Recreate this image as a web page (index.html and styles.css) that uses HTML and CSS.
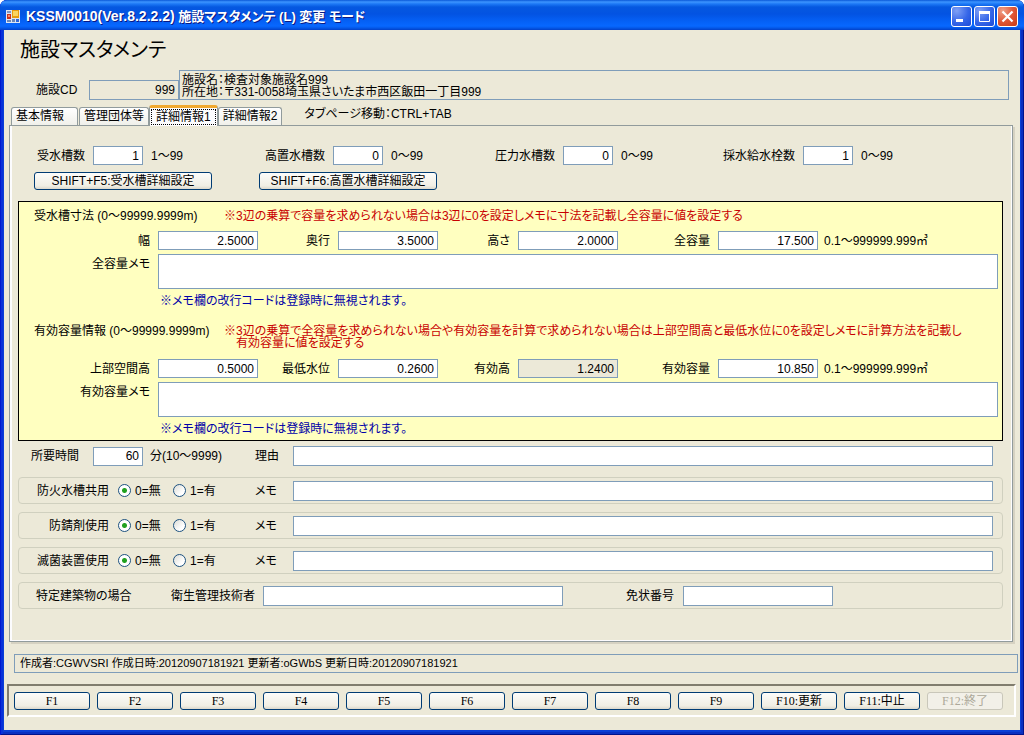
FILE: index.html
```html
<!DOCTYPE html>
<html lang="ja">
<head>
<meta charset="utf-8">
<title>KSSM0010 施設マスタメンテ</title>
<link rel="stylesheet" href="styles.css">
</head>
<body>
<div class="window">
  <header class="titlebar">
    <svg class="app-icon" width="15" height="15" viewBox="0 0 15 15" aria-hidden="true">
      <rect y="1" width="14" height="13" fill="#dfe6f2"/>
      <rect x="1" y="2" width="4" height="2" fill="#7c95c4"/>
      <rect x="1" y="5" width="4" height="5" fill="#c8321e"/>
      <rect x="2" y="6" width="2" height="2" fill="#f08a70"/>
      <rect x="6" y="1" width="7" height="8" fill="#e89c10"/>
      <rect x="7" y="2" width="5" height="5" fill="#fbd560"/>
      <rect x="1" y="11" width="4" height="2" fill="#6d88b8"/>
      <rect x="6" y="10" width="3" height="3" fill="#6d88b8"/>
      <rect x="10" y="10" width="3" height="3" fill="#2f66d8"/>
    </svg>
    <div class="caption"><span class="caption-id">KSSM0010(Ver.8.2.2.2)</span> 施設マスタメンテ (L) 変更 モード</div>
    <div class="controls">
      <button class="control" type="button" aria-label="最小化"><svg width="19" height="19" viewBox="0 0 19 19"><rect x="4" y="12" width="7" height="3" fill="#fff"/></svg></button>
      <button class="control" type="button" aria-label="最大化"><svg width="19" height="19" viewBox="0 0 19 19"><path d="M4.500 4.500h10v10h-10z" fill="none" stroke="#fff"/><path d="M4 4h11v3H4z" fill="#fff"/></svg></button>
      <button class="control control-close" type="button" aria-label="閉じる"><svg width="19" height="19" viewBox="0 0 19 19"><path d="M4.500 4.500l10 10M14.500 4.500l-10 10" stroke="#fff" stroke-width="2.200"/></svg></button>
    </div>
  </header>

  <main class="content">
    <h1 class="heading">施設マスタメンテ</h1>

    <div class="facility">
      <label class="facility-label" for="code">施設CD</label>
      <input class="field number readonly facility-code" id="code" value="999" readonly>
      <div class="facility-info">施設名：検査対象施設名999<br>所在地：〒331-0058埼玉県さいたま市西区飯田一丁目999</div>
    </div>

    <div class="tabs">
      <div class="tablist" role="tablist">
        <button class="tab" type="button" role="tab">基本情報</button>
        <button class="tab" type="button" role="tab">管理団体等</button>
        <button class="tab tab-active" type="button" role="tab" aria-selected="true"><span class="tab-focus">詳細情報1</span></button>
        <button class="tab" type="button" role="tab">詳細情報2</button>
      </div>
      <span class="tab-hint">タブページ移動：CTRL+TAB</span>
    </div>

    <section class="panel" role="tabpanel">
      <div class="counts">
        <label for="c1">受水槽数</label><input class="field number" id="c1" value="1"><span>1～99</span>
        <label for="c2">高置水槽数</label><input class="field number" id="c2" value="0"><span>0～99</span>
        <label for="c3">圧力水槽数</label><input class="field number" id="c3" value="0"><span>0～99</span>
        <label for="c4">採水給水栓数</label><input class="field number" id="c4" value="1"><span>0～99</span>
      </div>
      <div class="details">
        <button class="button" type="button">SHIFT+F5:受水槽詳細設定</button>
        <button class="button" type="button">SHIFT+F6:高置水槽詳細設定</button>
      </div>

      <div class="tank">
        <div class="tank-head">
          <div>受水槽寸法 (0～99999.9999m)</div>
          <div class="warning">※3辺の乗算で容量を求められない場合は3辺に0を設定しメモに寸法を記載し全容量に値を設定する</div>
        </div>
        <div class="measures">
          <label for="m1">幅</label><input class="field number" id="m1" value="2.5000">
          <label for="m2">奥行</label><input class="field number" id="m2" value="3.5000">
          <label for="m3">高さ</label><input class="field number" id="m3" value="2.0000">
          <label for="m4">全容量</label><input class="field number" id="m4" value="17.500">
          <span class="unit">0.1～999999.999㎥</span>
          <label class="memo-label" for="memo1">全容量メモ</label><textarea class="field memo" id="memo1"></textarea>
          <p class="notice">※メモ欄の改行コードは登録時に無視されます。</p>
        </div>

        <div class="tank-head tank-head-second">
          <div>有効容量情報 (0～99999.9999m)</div>
          <div class="warning">※3辺の乗算で全容量を求められない場合や有効容量を計算で求められない場合は上部空間高と最低水位に0を設定しメモに計算方法を記載し<br>有効容量に値を設定する</div>
        </div>
        <div class="measures">
          <label for="n1">上部空間高</label><input class="field number" id="n1" value="0.5000">
          <label for="n2">最低水位</label><input class="field number" id="n2" value="0.2600">
          <label for="n3">有効高</label><input class="field number readonly" id="n3" value="1.2400" readonly>
          <label for="n4">有効容量</label><input class="field number" id="n4" value="10.850">
          <span class="unit">0.1～999999.999㎥</span>
          <label class="memo-label" for="memo2">有効容量メモ</label><textarea class="field memo" id="memo2"></textarea>
          <p class="notice">※メモ欄の改行コードは登録時に無視されます。</p>
        </div>
      </div>

      <div class="time">
        <label for="t1">所要時間</label>
        <input class="field number" id="t1" value="60">
        <span>分(10～9999)</span>
        <label for="t2">理由</label>
        <input class="field" id="t2">
      </div>

      <div class="group" role="radiogroup" aria-label="防火水槽共用">
        <span class="group-label">防火水槽共用</span>
        <label class="choice"><input class="radio" type="radio" name="g1" checked>0=無</label>
        <label class="choice"><input class="radio" type="radio" name="g1">1=有</label>
        <label for="g1m">メモ</label>
        <input class="field" id="g1m">
      </div>
      <div class="group" role="radiogroup" aria-label="防錆剤使用">
        <span class="group-label">防錆剤使用</span>
        <label class="choice"><input class="radio" type="radio" name="g2" checked>0=無</label>
        <label class="choice"><input class="radio" type="radio" name="g2">1=有</label>
        <label for="g2m">メモ</label>
        <input class="field" id="g2m">
      </div>
      <div class="group" role="radiogroup" aria-label="滅菌装置使用">
        <span class="group-label">滅菌装置使用</span>
        <label class="choice"><input class="radio" type="radio" name="g3" checked>0=無</label>
        <label class="choice"><input class="radio" type="radio" name="g3">1=有</label>
        <label for="g3m">メモ</label>
        <input class="field" id="g3m">
      </div>
      <div class="group building">
        <span>特定建築物の場合</span>
        <label for="b1">衛生管理技術者</label>
        <input class="field" id="b1">
        <label for="b2">免状番号</label>
        <input class="field" id="b2">
      </div>
    </section>

    <div class="status">作成者:CGWVSRI 作成日時:20120907181921 更新者:oGWbS 更新日時:20120907181921</div>

    <nav class="keys">
      <button class="button key" type="button">F1</button>
      <button class="button key" type="button">F2</button>
      <button class="button key" type="button">F3</button>
      <button class="button key" type="button">F4</button>
      <button class="button key" type="button">F5</button>
      <button class="button key" type="button">F6</button>
      <button class="button key" type="button">F7</button>
      <button class="button key" type="button">F8</button>
      <button class="button key" type="button">F9</button>
      <button class="button key" type="button">F10:更新</button>
      <button class="button key" type="button">F11:中止</button>
      <button class="button key" type="button" disabled>F12:終了</button>
    </nav>
  </main>
</div>
</body>
</html>
```
FILE: styles.css
```css
* { box-sizing: border-box; }

body {
  margin: 0;
  background: #fff;
  color: #000;
  font: 12px/14px "Liberation Sans", "Noto Sans CJK JP", sans-serif;
  font-feature-settings: "palt";
}

button, input, textarea {
  margin: 0;
  font: inherit;
  font-feature-settings: inherit;
  color: inherit;
}

.window {
  display: flex;
  flex-direction: column;
  min-height: 100vh;
  padding: 0 4px 5px;
  background: #0a3fd6;
  box-shadow: inset 1px 0 #0019cf, inset -1px -1px #00138c, inset 3px 0 #0831d9, inset -3px -3px #0a2fc0;
  border-radius: 7px 7px 0 0;
}

.titlebar {
  display: flex;
  align-items: center;
  height: 30px;
  margin: 0 -4px;
  padding: 2px 6px 0;
  border-radius: 7px 7px 0 0;
  background: linear-gradient(#0a58d8 0, #3d95ff 2px, #1c78f5 4px, #0558e0 7px, #0353e2 14px, #0560f5 21px, #0768ff 26px, #0458e8 28px, #0340c8 30px);
  color: #fff;
}

.app-icon { flex: none; margin-right: 5px; }

.caption {
  flex: 1;
  font-size: 13px;
  font-weight: bold;
  white-space: nowrap;
  text-shadow: 1px 1px #0a1883;
}

.caption-id { font-size: 14px; }

.controls { display: flex; gap: 2px; }

.control {
  width: 21px;
  height: 21px;
  padding: 0;
  border: 1px solid #fff;
  border-radius: 3px;
  background: radial-gradient(circle at 25% 20%, #7fa0f5, #3566e8 55%, #1c4bd8);
}

.control svg { display: block; }

.control-close { background: radial-gradient(circle at 25% 20%, #f0a088, #e05838 50%, #c83a14); }

.content {
  flex: 1;
  display: flex;
  flex-direction: column;
  padding: 6px 6px 13px 5px;
  background: #ece9d8;
}

.heading {
  margin: 0 0 0 11px;
  font-size: 20px;
  line-height: 28px;
  font-weight: normal;
}

.facility {
  display: flex;
  align-items: flex-end;
  margin: 6px 0 0 27px;
}

.facility-label { width: 53px; padding-bottom: 3px; }

.field {
  width: 100%;
  min-width: 0;
  height: 20px;
  padding: 0 3px;
  border: 1px solid #7f9db9;
  border-radius: 0;
  background: #fff;
  outline: none;
  resize: none;
}

.number { height: 19px; text-align: right; }

.readonly { background: #ece9d8; }

.facility-code { flex: none; width: 90px; height: 20px; }

.facility-info {
  flex: 1;
  height: 30px;
  margin-right: 5px;
  padding: 3px 2px;
  border: 1px solid #7f9db9;
  line-height: 12px;
}

.tabs {
  display: flex;
  align-items: flex-end;
  height: 20px;
  margin: 5px 0 0 2px;
}

.tablist { display: flex; align-items: flex-end; }

.tab {
  height: 18px;
  padding: 0 4px;
  border: 1px solid #919b9c;
  border-bottom: 0;
  border-radius: 3px 3px 0 0;
  background: linear-gradient(#fff, #f0f0ea);
  line-height: 17px;
}

.tab:first-child { width: 67px; margin-right: 1px; text-align: left; }

.tab-active {
  position: relative;
  height: 21px;
  margin-bottom: -1px;
  padding: 0 1px;
  border-top: 3px solid #f0a830;
  background: #fcfcfe;
}

.tab-focus {
  display: block;
  height: 16px;
  padding: 0 4px;
  border: 1px dotted #000;
  line-height: 14px;
}

.tab-hint { margin-left: 22px; padding-bottom: 4px; }

.panel {
  display: flex;
  flex: 1;
  flex-direction: column;
  margin-right: 1px;
  padding: 20px 9px 32px 8px;
  border: 1px solid #919b9c;
  box-shadow: inset 2px 0 #fcfcfe, inset -1px -1px #fcfcfe, 2px 2px #d6d2c2;
}

.counts {
  display: grid;
  grid-template-columns: 67px 50px 92px 74px 50px 82px 74px 50px 92px 74px 50px 1fr;
  column-gap: 8px;
  align-items: center;
}

.counts label, .measures label { text-align: right; }

.details { display: flex; gap: 47px; margin: 7px 0 0 16px; }

.button {
  height: 18px;
  padding: 0;
  border: 1px solid #003c74;
  border-radius: 3px;
  background: linear-gradient(#fcfcfa, #f0eee4 80%, #dcd8cc);
  line-height: 16px;
  white-space: nowrap;
}

.details .button { width: 178px; }

.tank {
  margin-top: 11px;
  padding: 7px 4px 4px;
  border: 1px solid #000;
  background: #ffffc0;
}

.tank-head {
  display: grid;
  grid-template-columns: 190px 1fr;
  margin-left: 11px;
  min-height: 22px;
}

.warning {
  padding: 1px 0 0 12px;
  color: #c80000;
  line-height: 12px;
  text-indent: -12px;
}

.measures {
  display: grid;
  grid-template-columns: 127px 100px 64px 100px 64px 100px 84px 100px 1fr;
  column-gap: 8px;
  row-gap: 4px;
  align-items: center;
}

.unit { margin-left: -2px; }

.measures .memo-label { align-self: start; padding-top: 3px; }

.memo { grid-column: 2 / -1; height: 35px; }

.notice {
  grid-column: 2 / -1;
  margin: 1px 0 0 2px;
  color: #0000a8;
}

.tank-head-second { min-height: 35px; margin-top: 16px; }

.time {
  display: grid;
  grid-template-columns: 62px 50px 7px 105px 38px 1fr;
  align-items: center;
  margin: 5px 10px 0 13px;
}

.time span { grid-column: 4; }

.group {
  display: grid;
  grid-template-columns: 99px 55px 82px 38px 1fr;
  align-items: center;
  height: 27px;
  margin-top: 8px;
  padding-right: 9px;
  border: 1px solid #d0d0bf;
  border-radius: 4px;
}

.time + .group { margin-top: 11px; }

.group-label { padding-right: 9px; text-align: right; }

.choice { display: flex; align-items: center; gap: 4px; }

.radio {
  appearance: none;
  flex: none;
  width: 13px;
  height: 13px;
  border: 1px solid #1d5281;
  border-radius: 50%;
  background: linear-gradient(135deg, #dcdcd6, #fff 70%);
}

.radio:checked { background: radial-gradient(circle, #21a121 0 2px, #fff 3px); }

.building { grid-template-columns: 135px 92px 300px 63px 57px 150px; padding-left: 17px; }

.building label { padding-right: 8px; }

.building label:last-of-type { grid-column: 5; padding: 0; }

.status {
  margin: 12px -4px 0 5px;
  padding: 1px 5px 2px;
  border: 1px solid #7f9db9;
  font-size: 11px;
}

.keys {
  display: grid;
  grid-template-columns: repeat(12, 1fr);
  gap: 7px;
  margin: 11px -2px 0;
  padding: 6px 11px 5px 5px;
  border: 2px solid;
  border-color: #807d6e #fff #fff #807d6e;
}

.key { font-family: "Liberation Serif", "Noto Sans CJK JP", serif; }

.key:disabled {
  border-color: #c9c7ba;
  background: #f2f0e8;
  color: #aca899;
}
```
